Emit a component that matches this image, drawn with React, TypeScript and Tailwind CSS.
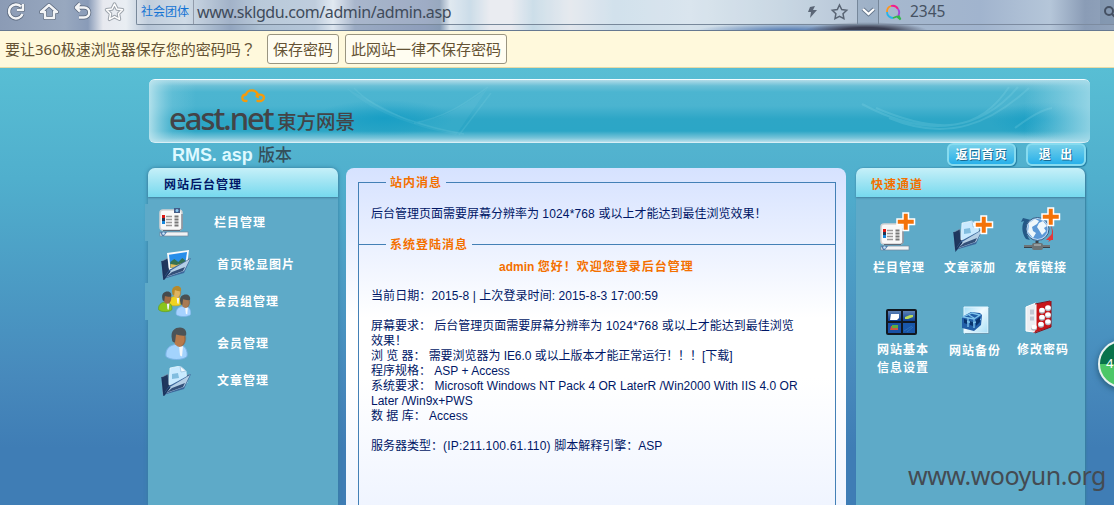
import React from "react";

const sans = "font-['Liberation_Sans','Noto_Sans_CJK_SC',sans-serif]";
const ui = "font-['Noto_Sans','Noto_Sans_CJK_SC',sans-serif]";

function Plus({ x, y }: { x: number; y: number }) {
  return (
    <path
      transform={`translate(${x} ${y})`}
      d="M7 1h5.500v6h6v5.500h-6v6H7v-6H1V7h6z"
      fill="#f47208"
      stroke="#fff"
      strokeWidth="1.500"
    />
  );
}

function BoardShape({ pin = true }: { pin?: boolean }) {
  return (
    <g>
      <rect x="1" y="2" width="22" height="20" rx="3" fill="#f8f8f8" stroke="#d5d3d4" strokeWidth="1.500" />
      <path d="M4 22.500h17l2-2V6" fill="none" stroke="#626977" strokeWidth="1" />
      <rect x="3" y="7" width="3" height="3" fill="#df1814" />
      <rect x="3" y="10" width="3" height="3" fill="#243553" />
      <rect x="3" y="13" width="3" height="3" fill="#1687dc" />
      <path d="M7 8.500h6M7 11.500h6M7 14.500h6M7 17.500h6" stroke="#9b9999" strokeWidth="1.600" />
      <path d="M15.500 8.500h4M15.500 11.500h4M15.500 14.500h4M15.500 17.500h4" stroke="#777" strokeWidth="2" />
      {pin && (
        <g>
          <rect x="15" y="0" width="6" height="5" fill="#435c88" />
          <circle cx="18" cy="2.500" r="1.500" fill="#8ac7f2" />
        </g>
      )}
      <rect x="1" y="24" width="28" height="4" fill="#f1f3f5" stroke="#76869a" strokeWidth=".7" />
      <path d="M1 24h7l-3 4H3z" fill="#527ba9" />
      <circle cx="4.500" cy="25.500" r="1.300" fill="#c9e5fb" />
    </g>
  );
}

function FolderShape({ photo = false }: { photo?: boolean }) {
  return (
    <g>
      <path d="m1 11 6-3 1 10 21-10-8 14L2 29z" fill="#20375e" stroke="#7f9db7" strokeWidth=".7" />
      {photo ? (
        <g>
          <path d="m6 3 22-3-2 16L8 20z" fill="#f8fafc" />
          <path d="m8 4.800 18-2.900-1.700 12.600L9.500 18z" fill="#278eea" />
          <path d="m9.300 12 4-3 4 3 4-4 3.700 3-.7 3.500L9.500 18z" fill="#367253" />
          <path d="m9.500 14 6 1 9-3-.6 2.700L9.500 18z" fill="#e0bc5d" />
        </g>
      ) : (
        <g>
          <path d="m9 2 10-2 6 5 1 12-18 2z" fill="#c9eaff" stroke="#eefaff" strokeWidth=".7" />
          <path d="m19 0 1 6 5-1z" fill="#f7fcff" stroke="#8cb8d9" strokeWidth=".6" />
          <path d="m11 8 6-1 1 5-7 1z" fill="#81bddf" />
        </g>
      )}
      <path d="m8 20 22-12-7 15L2 29z" fill="#3c679b" />
      <path d="m9 21 20-12-6 12L3 28z" fill="#b5cfe5" />
      <path d="m11 22 13-5-2 4L5 27z" fill="#345079" />
      <path d="m1 11 2 18 6-8" fill="none" stroke="#19345e" strokeWidth="1.500" />
    </g>
  );
}

function Person({ x, y, s, hair, skin, shirt, shade }: { x: number; y: number; s: number; hair: string; skin: string; shirt: string; shade: string }) {
  return (
    <g transform={`translate(${x} ${y}) scale(${s})`}>
      <path d="M1 29C0 22 4 18 10 17h5c5 1 8 6 7 12-4 4-17 4-21 0z" fill={shirt} stroke={shade} strokeWidth="1" />
      <path d="m14 18 4 1-1 10-2-1z" fill="#f4f8fa" />
      <ellipse cx="14.500" cy="11" rx="6" ry="8.500" fill={skin} />
      <path d="M7 12C5 3 10 0 15 0c5 0 7 4 6 8-4 1-8-1-10-1l-1 8c-2 0-3-1-3-3z" fill={hair} />
      <path d="M19 9c1 4 0 8-4 10 5 0 7-6 6-11z" fill="#704427" opacity=".35" />
    </g>
  );
}

function BoardIcon() {
  return <svg width="31" height="30" viewBox="0 0 31 30"><BoardShape /></svg>;
}
function PhotoIcon() {
  return <svg width="31" height="30" viewBox="0 0 31 30"><FolderShape photo /></svg>;
}
function FolderIcon() {
  return <svg width="31" height="30" viewBox="0 0 31 30"><FolderShape /></svg>;
}
function GroupIcon() {
  return (
    <svg width="33" height="31" viewBox="0 0 33 31">
      <Person x={10} y={0} s={0.62} hair="#b78a2b" skin="#dfb45f" shirt="#efd31d" shade="#c9a51a" />
      <Person x={0} y={5.5} s={0.63} hair="#454a4d" skin="#a16c45" shirt="#8ac51c" shade="#5f9a17" />
      <Person x={17.5} y={8.5} s={0.69} hair="#4a5053" skin="#a97b54" shirt="#a6d2ff" shade="#7bb2e6" />
    </svg>
  );
}
function UserIcon() {
  return (
    <svg width="24" height="33" viewBox="0 0 24 33">
      <Person x={0} y={0.5} s={1} hair="#4c5357" skin="#b87a4b" shirt="#a3d3fd" shade="#79b2e4" />
    </svg>
  );
}
function BoardAddIcon() {
  return (
    <svg width="37" height="40" viewBox="0 0 37 40">
      <g transform="translate(0 10)"><BoardShape pin={false} /></g>
      <Plus x={16} y={0} />
    </svg>
  );
}
function FolderAddIcon() {
  return (
    <svg width="42" height="38" viewBox="0 0 42 38">
      <g transform="translate(0 6)"><FolderShape /></g>
      <Plus x={21} y={0} />
    </svg>
  );
}
function GlobeAddIcon() {
  return (
    <svg width="41" height="46" viewBox="0 0 41 46">
      <path d="M11 13C4 19 6 28 10 33l-4-1C1 25 2 18 4 14l-3 1 2-4z" fill="#245987" />
      <path d="M29 16c5 7 3 14-1 19l5-3V24l-2-6z" fill="#d83b3b" />
      <path d="m26 33 7-7v7z" fill="#e2383b" />
      <circle cx="17.500" cy="22" r="11.500" fill="#b8d8f4" stroke="#345a84" />
      <circle cx="17.500" cy="22" r="10" fill="#5b98d6" />
      <path d="m9 16 6-4 4 2-2 3-5 3 1 4 3 2-3 5-5-6zM19 16l4-2 4 5-3 2 2 3-4 4-3-5-2-3z" fill="#eef7fb" />
      <path d="M17 34v4M4 39.500h26" stroke="#384047" strokeWidth="3" />
      <path d="M4 39h26" stroke="#a5a9a9" strokeWidth="1" />
      <rect x="12" y="36" width="11" height="7" rx="2" fill="#6b7375" />
      <path d="M14 38h7" stroke="#c2c8c8" />
      <Plus x={21} y={0} />
    </svg>
  );
}
function SettingsIcon() {
  return (
    <svg width="31" height="26" viewBox="0 0 31 26">
      <defs><linearGradient id="tile" x1="0" y1="0" x2="0" y2="1"><stop stopColor="#5d82b5" /><stop offset="1" stopColor="#0d3f93" /></linearGradient></defs>
      <rect width="31" height="26" rx="2" fill="#111821" />
      <rect x="2" y="2" width="13" height="10" fill="url(#tile)" />
      <rect x="17" y="2" width="12" height="10" fill="url(#tile)" />
      <rect x="2" y="14" width="13" height="10" fill="#1951a5" />
      <rect x="17" y="14" width="12" height="10" fill="#1957aa" />
      <path d="M5 5h8v4l-2 2H4z" fill="#fff" />
      <path d="m19 8 5-2h3v2l-5 2h-3z" fill="#b9da57" />
      <path d="M5 17h7v4H4z" fill="#cf5740" /><path d="M6 16h6v3H6z" fill="#5fac3e" />
      <path d="m18 22 8-5M21 23l6-5" stroke="#2d71b8" />
    </svg>
  );
}
function BackupIcon() {
  return (
    <svg width="29" height="29" viewBox="0 0 29 29">
      <defs><linearGradient id="backup" x1="0" y1="0" x2="1" y2="1"><stop stopColor="#a5def7" /><stop offset=".45" stopColor="#effaff" /><stop offset="1" stopColor="#a8def6" /></linearGradient></defs>
      <path d="M3 1h24v26H3z" fill="url(#backup)" stroke="#e3f6ff" />
      <path d="M4 27.500h24V2" fill="none" stroke="#6e9bb2" />
      <path d="m1 11 9-5 9 1 2 2-1 10-7 6-12-3z" fill="#215ea7" />
      <path d="m2 11 9-4 8 2-6 4zM8 9l5 3v10M3 15l10 2 7-4M7 12v9" fill="none" stroke="#7dc3ec" strokeWidth="1.300" />
      <path d="m3 13 3 1v4l-3-1zm6 2 3 1v4l-3-1zm6-1 4-3v5l-4 4z" fill="#08336e" />
    </svg>
  );
}
function PasswordIcon() {
  return (
    <svg width="28" height="34" viewBox="0 0 28 34">
      <path d="M11 4 26 1v26L8 33z" fill="#c81518" />
      <path d="m1 7 10-4v24l-2 5-8-1z" fill="#eceef2" stroke="#fff" />
      <path d="M5 9.500h4v5H5zm0 7h4v4H5z" fill="#c2c9d4" />
      <path d="m10 4 15-3M10 33l16-6V1" fill="none" stroke="#85101a" />
      {[[17, 10], [23, 7.5], [17, 17], [23, 14.5], [16, 24], [23, 21.5], [9, 27]].map(([x, y]) => (
        <g key={`${x}-${y}`}><ellipse cx={x} cy={y + 1} rx="3" ry="2.700" fill="#b3bac3" /><ellipse cx={x} cy={y} rx="2.700" ry="2.200" fill="#fff" /></g>
      ))}
    </svg>
  );
}

function Toolbar() {
  return (
    <div className={`${ui} flex h-[31px] shrink-0 border-b border-[#667991] bg-[radial-gradient(ellipse_62px_9px_at_866px_31px,#3b3f52_40%,#3b3f5200),radial-gradient(ellipse_95px_8px_at_790px_31px,#6286b8_20%,#6286b800),linear-gradient(90deg,#8b9bb5_0px,#98a8bf_65px,#899bb8_88px,#e7e9ef_103px,#e9eef3_126px,#b6c5d7_148px,#c7d5e2_185px,#92a5bf_230px,#adc0d3_260px,#b4c5d8_315px,#dce5ef_333px,#9aaac3_355px,#8e9ebb_425px,#879bb4_440px,#dbe5ee_450px,#c3d7e5_470px,#e7e9ef_490px,#e7e9ef_511px,#c4d9e6_533px,#e2e6ec_570px,#cadce9_615px,#d4e1eb_690px,#c0d1df_780px,#a7b9ce_870px,#a1b4ce_980px,#b5c6d9_1050px,#8a9cb6_1085px,#91a3bb_1114px)]`}>
      <div className="flex h-[24px] w-[136px] items-center">
        <svg width="130" height="24" viewBox="0 0 130 24" fill="none" stroke="#59677c" strokeWidth="4" strokeLinejoin="round">
          <path d="M21 6.500A7 7 0 1 0 22.500 14M23 4v6h-6M41 12l8-7 8 7h-3v6H45v-6zM80 3.500l-4 4 4 4M77 7.500h7c7 0 7 10 0 10h-5" />
          <path d="M21 6.500A7 7 0 1 0 22.500 14M23 4v6h-6M41 12l8-7 8 7h-3v6H45v-6zM80 3.500l-4 4 4 4M77 7.500h7c7 0 7 10 0 10h-5" stroke="#f3f5f7" strokeWidth="2.500" />
          <path d="m114.500 4 2.500 5 5.500.8-4 4 1 5.500-5-2.700-5 2.700 1-5.500-4-4 5.500-.8z" stroke="#9da4ac" strokeWidth="3.500" />
          <path d="m114.500 4 2.500 5 5.500.8-4 4 1 5.500-5-2.700-5 2.700 1-5.500-4-4 5.500-.8z" stroke="#fff" strokeWidth="1.500" />
        </svg>
      </div>
      <div className="flex h-[25px] w-[721px] items-center rounded-bl-[2px] border-b border-l border-[#78889a] bg-white/15">
        <span className="flex h-[24px] w-[57px] items-center border-r border-[#929cab] pl-[4px] text-[12px] text-[#1474d4]">社会团体</span>
        <span className="pl-[3px] text-[16px] leading-[24px] tracking-[-0.400px] text-[#404b5b]">www.sklgdu.com/admin/admin.asp</span>
        <svg className="ml-auto mr-[8px]" width="44" height="24" viewBox="0 0 44 24">
          <path d="m5 7 5-1-2 4h4l-7 8 1-6H3z" fill="#5b6676" />
          <path d="m34.500 5 2.200 4.500 5 .7-3.700 3.500.9 5-4.400-2.400-4.500 2.400.9-5-3.600-3.500 5-.7z" fill="none" stroke="#596473" strokeWidth="1.500" />
        </svg>
      </div>
      <div className="flex h-[25px] w-[22px] items-center justify-center border-x border-b border-[#76879a] bg-[#8fa4bb]/35">
        <svg width="15" height="12" viewBox="0 0 15 12" fill="none"><path d="m2 3 5.500 5L13 3" stroke="#66778c" strokeWidth="4" /><path d="m2 3 5.500 5L13 3" stroke="#fff" strokeWidth="2.200" /></svg>
      </div>
      <div className="flex h-[25px] flex-1 items-center border-b border-[#7c8ba0] pl-[6px]">
        <svg width="18" height="18" viewBox="0 0 18 18" fill="none" strokeWidth="1.800">
          <path d="M2 9a6.200 6.200 0 0 1 4-6" stroke="#ff951c" /><path d="M6 3a6.200 6.200 0 0 1 7 3" stroke="#f51d8a" /><path d="M13 6a6.200 6.200 0 0 1 0 7" stroke="#a544d9" /><path d="M8 15A6 6 0 0 1 2 9" stroke="#27b4e8" /><path d="m8 15 4-1.500 3.500 3-2-4" stroke="#31b64b" />
        </svg>
        <span className="ml-[7px] text-[15.500px] text-[#465263]">2345</span>
        <div className="ml-auto flex h-[24px] w-[14px] items-center overflow-hidden bg-[#7086a0]/35"><svg className="ml-[3px] shrink-0" width="13" height="15" viewBox="0 0 13 15" fill="none" stroke="#455163" strokeWidth="2"><circle cx="6" cy="6" r="4" /><path d="m9 9 4 4" /></svg></div>
      </div>
    </div>
  );
}

const navItems = [
  { label: "栏目管理", icon: <BoardIcon />, row: "-ml-[3px] pl-[14px]", box: "w-[55px]" },
  { label: "首页轮显图片", icon: <PhotoIcon />, row: "mt-[5px] pl-[13px]", box: "w-[56px]" },
  { label: "会员组管理", icon: <GroupIcon />, row: "-ml-[3px] pl-[13px]", box: "w-[56px]" },
  { label: "会员管理", icon: <UserIcon />, row: "mt-[5px] pl-[17px]", box: "w-[52px]" },
  { label: "文章管理", icon: <FolderIcon />, row: "pl-[13px]", box: "w-[56px]" },
];

const columnHead = "flex h-[29px] shrink-0 items-center rounded-t-[7px] bg-[linear-gradient(#c6f0f9,#a2e5f3_45%,#76d9ee)] text-[12px] font-bold tracking-[1px] shadow-[0_1px_2px_#417f9c] pt-[4px]";

function Sidebar() {
  return (
    <aside className="flex w-[190px] flex-col rounded-t-[7px] bg-[#5eaac8] shadow-[0_0_4px_#357d9d]">
      <div className={`${columnHead} pl-[16px] text-[#001766]`}>网站后台管理</div>
      <nav className="flex flex-col pt-[7px]">
        {navItems.map((item) => (
          <div key={item.label} className={`flex h-[37px] items-center bg-[#5eaac8] text-[12px] font-bold leading-[15px] tracking-[1px] text-white ${item.row}`}>
            <span className={item.box}>{item.icon}</span><span className="pt-[2px]">{item.label}</span>
          </div>
        ))}
      </nav>
    </aside>
  );
}

function Line({ children, className = "" }: { children?: React.ReactNode; className?: string }) {
  return <div className={`h-[15px] whitespace-pre leading-[15px] ${className}`}>{children}</div>;
}

function MainPanel() {
  return (
    <main className="ml-[8px] w-[500px] rounded-t-[8px] bg-[linear-gradient(#d6e2ff,#fff_150px,#fff_210px,#ecf2ff_370px)] pl-[12px] pr-[10px] pt-[7px] text-[12px] text-[#001766]">
      <fieldset className="h-[69px] border border-b-0 border-[#4380b6] pl-[12px]">
        <legend className="ml-[15px] h-[14px] px-[4px] font-bold leading-[16px] tracking-[1px] text-[#f47000]">站内消息</legend>
        <div className="pt-[18px]"><Line>后台管理页面需要屏幕分辨率为 <span className="tracking-[0.150px]">1024*768 </span>或以上才能达到最佳浏览效果！</Line></div>
      </fieldset>
      <fieldset className="-mt-[7px] h-[275px] border border-b-0 border-[#4380b6] pl-[12px]">
        <legend className="ml-[15px] h-[14px] px-[4px] font-bold leading-[16px] tracking-[1px] text-[#f47000]">系统登陆消息</legend>
        <div className="pt-[8px]">
          <div className="h-[15px] pl-[128px] font-bold leading-[17px] text-[#f47000]">admin <span className="tracking-[1px]">您好！欢迎您登录后台管理</span></div>
          <Line />
          <Line className="tracking-[0.080px]">当前日期：2015-8 | 上次登录时间: 2015-8-3 17:00:59</Line>
          <Line />
          <Line>屏幕要求： 后台管理页面需要屏幕分辨率为 <span className="tracking-[0.150px]">1024*768 </span>或以上才能达到最佳浏览</Line>
          <Line>效果！</Line>
          <Line className="tracking-[-0.050px]">浏 览 器： 需要浏览器为 IE6.0 或以上版本才能正常运行！！！[下载]</Line>
          <Line>程序规格： ASP + Access</Line>
          <Line className="tracking-[0.030px]">系统要求： Microsoft Windows NT Pack 4 OR LaterR /Win2000 With IIS 4.0 OR</Line>
          <Line>Later /Win9x+PWS</Line>
          <Line>数 据 库： Access</Line>
          <Line />
          <Line>服务器类型：<span className="tracking-[0.180px]">(IP:211.100.61.110) </span>脚本解释引擎：ASP</Line>
        </div>
      </fieldset>
    </main>
  );
}

function Shortcut({ icon, iconBox, labels, className }: { icon: React.ReactNode; iconBox: string; labels: string[]; className: string }) {
  return (
    <div className={`flex flex-col ${className}`}>
      <div className={`flex items-end ${iconBox}`}>{icon}</div>
      {labels.map((label) => <span key={label} className="h-[18px] whitespace-nowrap leading-[18px]">{label}</span>)}
    </div>
  );
}

function QuickPanel() {
  return (
    <aside className="ml-[10px] flex w-[229px] flex-col rounded-t-[7px] bg-[#5eaac8] text-[12px] font-bold tracking-[1px] text-white shadow-[1px_0_2px_#357d9d]">
      <div className={`${columnHead} pl-[15px] text-[#f47000]`}>快速通道</div>
      <div className="flex h-[94px] pl-[17px] pt-[6px]">
        <Shortcut icon={<BoardAddIcon />} iconBox="h-[42px] pl-[7px]" labels={["栏目管理"]} className="w-[71px] pt-[7px] [&>span]:mt-[7px]" />
        <Shortcut icon={<FolderAddIcon />} iconBox="h-[43px] pl-[9px]" labels={["文章添加"]} className="w-[71px] pt-[7px] [&>span]:mt-[6px]" />
        <Shortcut icon={<GlobeAddIcon />} iconBox="h-[45px] pl-[5px]" labels={["友情链接"]} className="w-[70px] pt-[5px] [&>span]:mt-[6px]" />
      </div>
      <div className="flex pl-[21px]">
        <Shortcut icon={<SettingsIcon />} iconBox="h-[44px] pl-[9px]" labels={["网站基本", "信息设置"]} className="w-[72px] [&>span:nth-child(2)]:mt-[6px]" />
        <Shortcut icon={<BackupIcon />} iconBox="h-[44px] pl-[12px]" labels={["网站备份"]} className="w-[68px] [&>span]:mt-[7px]" />
        <Shortcut icon={<PasswordIcon />} iconBox="h-[43px] pl-[8px]" labels={["修改密码"]} className="w-[68px] [&>span]:mt-[7px]" />
      </div>
    </aside>
  );
}

function Banner() {
  return (
    <header className="relative h-[64px] shrink-0 overflow-hidden rounded-[6px] border-y border-t-[#f2fcff] border-b-[#d8eff6] bg-[linear-gradient(#b3dce8,#68bfd6_6px,#4cb5d0_12px,#4bb4d0_26px,#2da6c6_39px,#2ca6c6_51px,#78c4d9_58px,#b9e0eb)]">
      <svg className="absolute inset-0" width="941" height="62" viewBox="0 0 941 62" fill="none">
        <defs>
          <linearGradient id="edge"><stop stopColor="#c3e8f0" stopOpacity=".85" /><stop offset=".025" stopColor="#9bd8e7" stopOpacity=".25" /><stop offset=".05" stopColor="#9bd8e7" stopOpacity="0" /><stop offset=".93" stopColor="#9bd8e7" stopOpacity="0" /><stop offset="1" stopColor="#a5dcea" stopOpacity=".8" /></linearGradient>
          <radialGradient id="blue"><stop stopColor="#109bc4" stopOpacity=".7" /><stop offset="1" stopColor="#109bc4" stopOpacity="0" /></radialGradient>
        </defs>
        <ellipse cx="235" cy="38" rx="70" ry="18" fill="url(#blue)" />
        <ellipse cx="895" cy="40" rx="55" ry="18" fill="url(#blue)" />
        <path d="M197 8C225 35 275 49 307 55l32-47C310 30 290 40 265 43" fill="#a5e1ec" fillOpacity=".08" />
        <path d="M205 8C230 35 285 49 315 54M265 43C300 37 320 20 339 7M310 55l32-42" stroke="#8ddbe8" strokeOpacity=".16" strokeWidth="1.500" />
        <path d="M727 28C790 55 830 52 860 7M713 24C780 60 833 50 869 7M740 38C800 63 843 42 880 8M866 48q24-18 37-20" stroke="#8ddbe8" strokeOpacity=".22" strokeWidth="2" />
        <rect width="941" height="62" fill="url(#edge)" />
      </svg>
      <div className="relative flex h-[62px] items-end pl-[20px] pb-[6px] text-[#434447]">
        <svg className="absolute left-[92px] top-[9px]" width="25" height="14" viewBox="0 0 25 14" fill="none"><path d="M5.500 12C0 12 0 6 5 5.500 7 0 15 0 17 6c-2 0-2 1.500 0 2M17 6c4-1 7 1 5.500 4-1 2-3 2.500-6 2" stroke="#f59a0b" strokeWidth="2.300" strokeLinecap="round" strokeLinejoin="round" /></svg>
        <span className="w-[108px] whitespace-nowrap font-['Noto_Sans'] text-[31px] font-medium leading-[36px] tracking-[-2.050px]">east.net</span>
        <span className="font-['Noto_Sans_CJK_SC'] text-[19.500px] font-medium leading-[30px]">東方网景</span>
      </div>
    </header>
  );
}

function ActionButton({ className, children }: { className: string; children: React.ReactNode }) {
  return <button className={`flex h-[23px] items-center justify-center whitespace-pre rounded-[6px] border-2 border-[#86dbef] bg-[linear-gradient(#73cfe9,#28b0ea)] pt-[1px] text-[12px] font-bold leading-[14px] tracking-[1px] text-white shadow-[1px_1px_1px_#247ea3] [text-shadow:1px_1px_0_#176a91] ${className}`}>{children}</button>;
}

export default function App() {
  return (
    <div className={`${sans} relative flex h-[505px] w-[1114px] flex-col overflow-hidden`}>
      <Toolbar />
      <div className={`${ui} flex h-[37px] shrink-0 items-center border-b border-[#e9dba6] bg-[#fff9dc] pl-[5px] text-[15px] text-[#655334]`}>
        <span className="w-[262px] whitespace-nowrap">要让360极速浏览器保存您的密码吗<span className="font-['Noto_Sans_CJK_TC']" lang="zh-TW">？</span></span>
        <button className="h-[30px] w-[72px] whitespace-nowrap rounded-[3px] border border-[#9a9580] bg-[#fffdf1]">保存密码</button>
        <button className="ml-[6px] h-[30px] w-[162px] whitespace-nowrap rounded-[3px] border border-[#9a9580] bg-[#fffdf1]">此网站一律不保存密码</button>
      </div>
      <div className="flex h-[437px] flex-col bg-[linear-gradient(#58bed4,#50afcd_110px,#4789bc_310px,#3f7db5_380px,#3f7db5)] pl-[148px] pt-[11px]">
        <div className="ml-[1px] flex w-[941px] flex-col"><Banner /></div>
        <div className="flex h-[25px] w-[938px] shrink-0 pl-[24px]">
          <span className="w-[86px] whitespace-nowrap text-[18px] font-bold leading-[25px] tracking-[-0.050px] text-[#def9ff]">RMS. asp</span>
          <span className="text-[17px] font-medium leading-[26px] text-[#344f5b]">版本</span>
          <ActionButton className="ml-auto w-[69px]">返回首页</ActionButton>
          <ActionButton className="ml-[10px] w-[60px]">退  出</ActionButton>
        </div>
        <div className="flex h-[337px] shrink-0"><Sidebar /><MainPanel /><QuickPanel /></div>
      </div>
      <div className="absolute left-[908px] top-[458px] whitespace-nowrap font-['Noto_Sans'] text-[25px] leading-[34px] tracking-[-0.500px] text-[#444b52]">www.wooyun.org</div>
      <div className="absolute left-[1098px] top-[340px] flex h-[48px] w-[48px] items-center rounded-full border-2 border-[#e8f2ef] bg-[linear-gradient(#08734b_50%,#4cc768_50%)] pl-[6px] font-['Noto_Sans'] text-[13px] text-white shadow-[0_2px_6px_#245775]">4</div>
    </div>
  );
}
